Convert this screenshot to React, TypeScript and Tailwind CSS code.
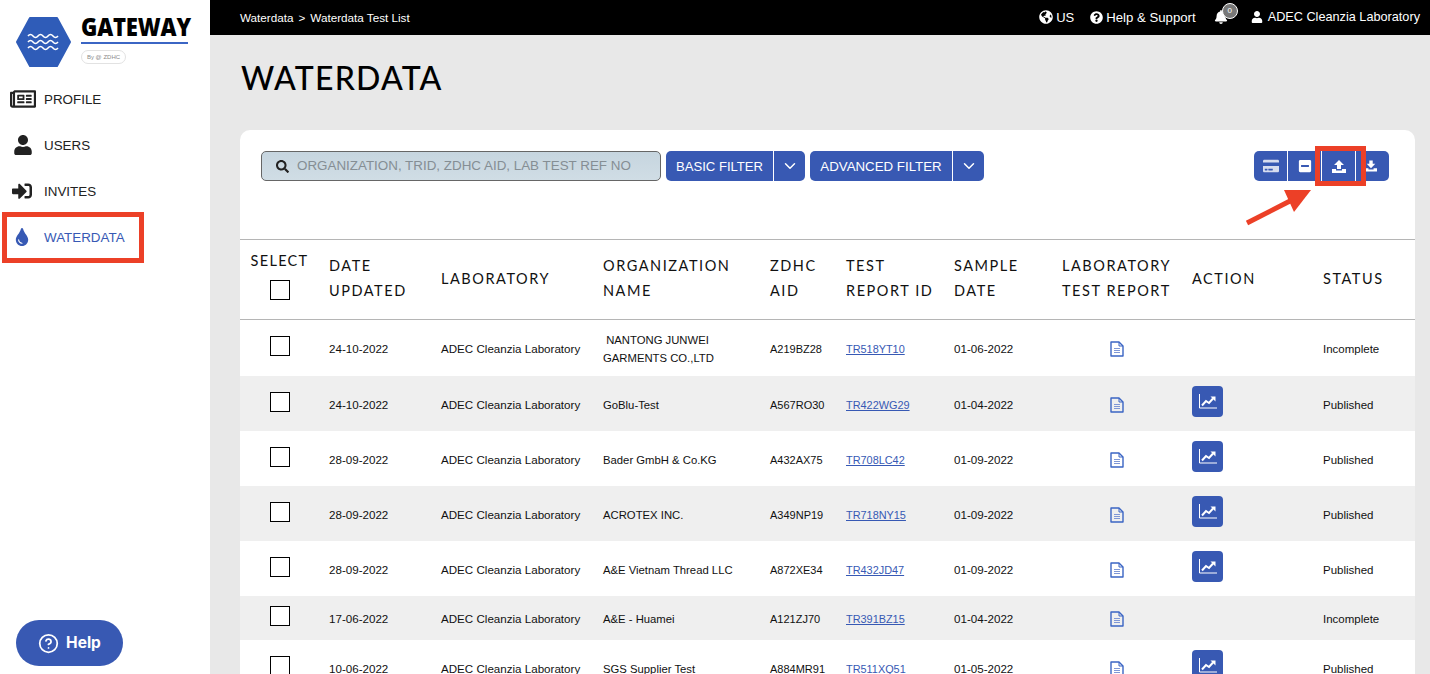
import { ChevronDown, CircleHelp } from "lucide-react";
import {
  FaBell,
  FaCreditCard,
  FaGlobeAmericas,
  FaMinusSquare,
  FaQuestionCircle,
  FaRegNewspaper,
  FaSearch,
  FaSignInAlt,
  FaTint,
  FaUser,
} from "react-icons/fa";

const navItems = [
  { label: "PROFILE", icon: <FaRegNewspaper className="size-[26px]" /> },
  { label: "USERS", icon: <FaUser className="ml-[3px] size-[20px]" /> },
  { label: "INVITES", icon: <FaSignInAlt className="ml-[2px] size-[20px]" /> },
  { label: "WATERDATA", icon: <FaTint className="ml-[3px] size-[18px]" />, active: true },
];

const rows = [
  { date: "24-10-2022", org: "\u00a0NANTONG JUNWEI GARMENTS CO.,LTD", aid: "A219BZ28", report: "TR518YT10", sample: "01-06-2022", chart: false, status: "Incomplete", h: "h-[56px]" },
  { date: "24-10-2022", org: "GoBlu-Test", aid: "A567RO30", report: "TR422WG29", sample: "01-04-2022", chart: true, status: "Published", h: "h-[55px]" },
  { date: "28-09-2022", org: "Bader GmbH & Co.KG", aid: "A432AX75", report: "TR708LC42", sample: "01-09-2022", chart: true, status: "Published", h: "h-[55px]" },
  { date: "28-09-2022", org: "ACROTEX INC.", aid: "A349NP19", report: "TR718NY15", sample: "01-09-2022", chart: true, status: "Published", h: "h-[55px]" },
  { date: "28-09-2022", org: "A&E Vietnam Thread LLC", aid: "A872XE34", report: "TR432JD47", sample: "01-09-2022", chart: true, status: "Published", h: "h-[55px]" },
  { date: "17-06-2022", org: "A&E - Huamei", aid: "A121ZJ70", report: "TR391BZ15", sample: "01-04-2022", chart: false, status: "Incomplete", h: "h-[44px]" },
  { date: "10-06-2022", org: "SGS Supplier Test", aid: "A884MR91", report: "TR511XQ51", sample: "01-05-2022", chart: true, status: "Published", h: "h-[55px]" },
];

function Logo() {
  return (
    <div className="flex h-[77px] items-start pl-4 pt-[17px]">
      <svg width="55" height="50" viewBox="0 0 55 50" aria-hidden="true">
        <path d="M14 1H41L54 25L41 49H14L1 25Z" fill="#2f5cb8" stroke="#2f5cb8" strokeWidth="2" strokeLinejoin="round" />
        <g fill="none" stroke="#fff" strokeWidth="1.6">
          <path d="M12 19q2.5-3 5-0t5 0t5 0t5 0t5 0t5 0" />
          <path d="M12 25q2.5-3 5-0t5 0t5 0t5 0t5 0t5 0" />
          <path d="M12 31q2.5-3 5-0t5 0t5 0t5 0t5 0t5 0" />
        </g>
      </svg>
      <div className="ml-[10px] -mt-[1px] flex w-[107px] flex-col">
        <span className="origin-left [transform:scaleX(0.92)] font-['Open_Sans',sans-serif] text-[24px] leading-[22px] font-extrabold tracking-[-0.2px] whitespace-nowrap text-black">
          GATEWAY
        </span>
        <div className="mt-[4px] h-[2px] bg-[#3b65c4]" />
        <div className="mt-[6px] flex h-[14px] w-[45px] items-center justify-center rounded-full border border-[#e2e2e2] font-['Liberation_Sans',sans-serif] text-[6px] text-[#8a8a8a]">
          By @ ZDHC
        </div>
      </div>
    </div>
  );
}

function Sidebar() {
  return (
    <aside className="flex h-full w-[210px] shrink-0 flex-col bg-white font-['Liberation_Sans',sans-serif]">
      <Logo />
      <nav className="flex flex-col">
        {navItems.map((item) => (
          <div
            key={item.label}
            className={`flex h-[46px] items-center pl-[10px] text-[13.4px] ${item.active ? "text-[#3759b4]" : "text-[#222]"}`}
          >
            <span className="-mt-[2px] flex w-[34px] shrink-0 items-center">{item.icon}</span>
            <span className="pt-[1px]">{item.label}</span>
          </div>
        ))}
      </nav>
      <button className="mt-auto mb-2 ml-4 flex h-[46px] w-[107px] items-center justify-center gap-[7px] rounded-full bg-[#3859b3] font-['Inter',sans-serif] text-[15.5px] font-bold text-white">
        <CircleHelp className="size-[21px]" strokeWidth={2} />
        Help
      </button>
    </aside>
  );
}

function TopBar() {
  return (
    <header className="flex h-[35px] shrink-0 items-center justify-between bg-black pr-[10px] pl-[30px] font-['Liberation_Sans',sans-serif] text-white">
      <div className="text-[11.7px] font-medium">
        Waterdata<span className="mx-[5px]">&gt;</span>Waterdata Test List
      </div>
      <div className="flex items-center">
        <span className="flex items-center gap-[3px] text-[13px]">
          <FaGlobeAmericas className="size-[14px]" /> US
        </span>
        <span className="ml-4 flex items-center gap-[3px] text-[13.2px]">
          <FaQuestionCircle className="size-[13px]" /> Help &amp; Support
        </span>
        <span className="relative mr-[18px] ml-[18px] flex items-center">
          <FaBell className="size-[14px]" />
          <span className="absolute -top-[7px] left-[8px] flex size-[16px] items-center justify-center rounded-full border border-white bg-[#777] text-[8px] leading-none">
            0
          </span>
        </span>
        <span className="ml-[5px] flex items-center gap-[5px] text-[12.7px]">
          <FaUser className="size-[12px]" /> ADEC Cleanzia Laboratory
        </span>
      </div>
    </header>
  );
}

function UploadIcon({ down = false }: { down?: boolean }) {
  return (
    <svg width={down ? 12 : 14} height={down ? 12 : 13} viewBox="0 0 14 13" fill="currentColor" aria-hidden="true">
      {down ? <path d="M5 0H9V4H12L7 9L2 4H5Z" /> : <path d="M7 0L12 5H9V9H5V5H2Z" />}
      <path d="M0 9H4V10.5H10V9H14V13H0Z" />
    </svg>
  );
}

function DocIcon() {
  return (
    <svg className="ml-[48px]" width="14" height="16" viewBox="0 0 14 16" fill="none" aria-hidden="true">
      <path d="M1 1H9L13 5V15H1Z" stroke="#3b65c4" strokeWidth="1.4" strokeLinejoin="round" />
      <path d="M9 1V5H13" stroke="#3b65c4" />
      <path d="M4 7.5H10M4 9.5H10M4 11.5H10" stroke="#7f97d6" strokeWidth="1.2" />
    </svg>
  );
}

function ChartIcon() {
  return (
    <svg width="18" height="15" viewBox="0 0 18 15" fill="none" aria-hidden="true">
      <path d="M0.5 0V14H18" stroke="#fff" />
      <path d="M3 11.5L7 7L10 9L14 4.5" stroke="#fff" strokeWidth="2" />
      <path d="M11.5 2.5H16.5V7.5Z" fill="#fff" />
    </svg>
  );
}

function Toolbar() {
  return (
    <div className="flex h-[109px] items-start px-[21px] pt-[21px] pr-[26px] font-['Liberation_Sans',sans-serif]">
      <div className="flex h-[30px] w-[400px] items-center rounded-[5px] border border-[#666] bg-gradient-to-b from-[#c6d5df] to-[#d0dde5] pt-[1px] pl-[14px] text-[13.4px] text-[#858e94]">
        <FaSearch className="mr-[8px] size-[13px] text-[#222]" />
        ORGANIZATION, TRID, ZDHC AID, LAB TEST REF NO
      </div>
      <div className="ml-[5px] flex h-[30px] overflow-hidden rounded-[5px] bg-[#3859b3] text-[13.1px] font-medium text-white">
        <span className="flex w-[108px] items-center justify-center border-r border-white pt-[1px]">BASIC FILTER</span>
        <span className="flex w-[31px] items-center justify-center">
          <ChevronDown className="size-[18px]" />
        </span>
      </div>
      <div className="ml-[5px] flex h-[30px] overflow-hidden rounded-[5px] bg-[#3859b3] text-[13.3px] font-medium text-white">
        <span className="flex w-[143px] items-center justify-center border-r border-white pt-[1px]">ADVANCED FILTER</span>
        <span className="flex w-[31px] items-center justify-center">
          <ChevronDown className="size-[18px]" />
        </span>
      </div>
      <div className="ml-auto flex h-[30px] overflow-hidden rounded-[5px] bg-[#3859b3] text-white">
        <span className="flex w-[34px] items-center justify-center border-r border-white">
          <FaCreditCard className="size-[16px] opacity-80" />
        </span>
        <span className="flex w-[34px] items-center justify-center border-r border-white">
          <FaMinusSquare className="size-[14px]" />
        </span>
        <span className="flex w-[34px] items-center justify-center border-r border-white">
          <UploadIcon />
        </span>
        <span className="flex w-[33px] items-center justify-center pr-[3px]">
          <UploadIcon down />
        </span>
      </div>
    </div>
  );
}

const thClass = "px-[10px] pb-[3px] text-left align-middle font-normal leading-[25px] tracking-[1.55px]";
const tdClass = "px-[10px] pt-[3px] align-middle";

function DataTable() {
  return (
    <table className="w-full table-fixed border-collapse text-[#111]">
      <colgroup>
        <col className="w-[79px]" />
        <col className="w-[112px]" />
        <col className="w-[162px]" />
        <col className="w-[167px]" />
        <col className="w-[76px]" />
        <col className="w-[108px]" />
        <col className="w-[108px]" />
        <col className="w-[130px]" />
        <col className="w-[131px]" />
        <col />
      </colgroup>
      <thead>
        <tr className="h-[80px] border-y border-[#b5b5b5] font-['Lato',sans-serif] text-[14.5px]">
          <th className="text-center align-middle font-normal tracking-[1.3px]">
            <div className="mb-[10px] leading-[18px]">SELECT</div>
            <div className="mx-auto mb-[8px] size-[20px] border border-black" />
          </th>
          <th className={thClass}>DATE UPDATED</th>
          <th className={thClass}>LABORATORY</th>
          <th className={thClass}>ORGANIZATION NAME</th>
          <th className={thClass}>ZDHC AID</th>
          <th className={thClass}>TEST REPORT ID</th>
          <th className={thClass}>SAMPLE DATE</th>
          <th className={thClass}>LABORATORY TEST REPORT</th>
          <th className={thClass}>ACTION</th>
          <th className={thClass}>STATUS</th>
        </tr>
      </thead>
      <tbody className="font-['Liberation_Sans',sans-serif] text-[11px] leading-[18px]">
        {rows.map((row, i) => (
          <tr key={row.report} className={`${row.h} ${i % 2 === 1 ? "bg-[#efefef]" : "bg-white"}`}>
            <td className="align-middle">
              <div className="mx-auto mb-[3px] size-[20px] border border-black bg-white" />
            </td>
            <td className={`${tdClass} text-[11.6px]`}>{row.date}</td>
            <td className={`${tdClass} text-[11.6px]`}>ADEC Cleanzia Laboratory</td>
            <td className={`${tdClass} text-[11.3px]`}>{row.org}</td>
            <td className={tdClass}>{row.aid}</td>
            <td className={`${tdClass} text-[10.9px]`}>
              <a className="text-[#3759b4] underline">{row.report}</a>
            </td>
            <td className={`${tdClass} text-[11.6px]`}>{row.sample}</td>
            <td className={tdClass}>
              <DocIcon />
            </td>
            <td className="px-[10px] align-middle">
              {row.chart && (
                <span className="mb-[3px] flex h-[31px] w-[31px] items-center justify-center rounded-[4px] bg-[#3859b3]">
                  <ChartIcon />
                </span>
              )}
            </td>
            <td className={`${tdClass} text-[11.5px]`}>{row.status}</td>
          </tr>
        ))}
      </tbody>
    </table>
  );
}

export default function App() {
  return (
    <div className="relative flex h-screen w-full overflow-hidden bg-[#e8e8e8]">
      <Sidebar />
      <main className="flex min-w-0 flex-1 flex-col">
        <TopBar />
        <h1 className="mt-[24px] ml-[31px] h-[71px] font-['Lato',sans-serif] text-[32px] leading-[38px] font-medium tracking-[1.2px] text-black">
          WATERDATA
        </h1>
        <section className="mr-[15px] ml-[30px] flex-1 overflow-hidden rounded-t-[10px] bg-white">
          <Toolbar />
          <DataTable />
        </section>
      </main>

      {/* red annotations drawn over the screenshot */}
      <div className="pointer-events-none absolute top-[212px] left-[2px] h-[51px] w-[142px] border-[5px] border-[#ec4027]" />
      <div className="pointer-events-none absolute top-[146px] left-[1315px] h-[40px] w-[51px] border-[5px] border-[#ec4027]" />
      <svg className="pointer-events-none absolute top-[185px] left-[1240px]" width="80" height="45" viewBox="0 0 80 45" aria-hidden="true">
        <path d="M7 38L50 16" stroke="#ec4027" strokeWidth="5" />
        <path d="M44 5H71L54 27Z" fill="#ec4027" />
      </svg>
    </div>
  );
}
